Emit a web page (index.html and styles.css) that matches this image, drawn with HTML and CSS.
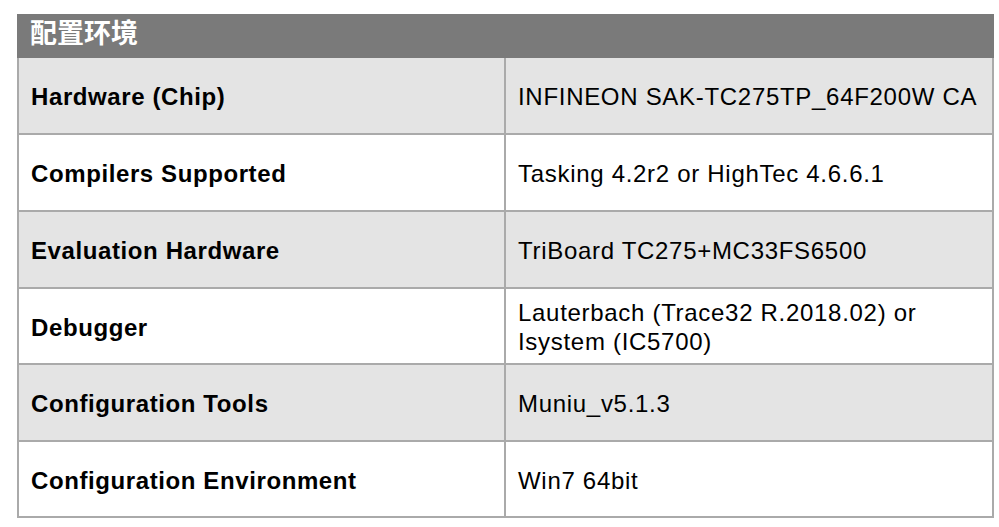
FILE: index.html
```html
<!DOCTYPE html>
<html>
<head>
<meta charset="utf-8">
<link rel="stylesheet" href="styles.css">
</head>
<body>
<div class="wrap">
  <div class="title">配置环境</div>
  <div class="tbl">
    <div class="row gray h77"><div class="k">Hardware (Chip)</div><div class="v">INFINEON SAK-TC275TP_64F200W CA</div></div>
    <div class="row h77"><div class="k">Compilers Supported</div><div class="v">Tasking 4.2r2 or HighTec 4.6.6.1</div></div>
    <div class="row gray h77"><div class="k">Evaluation Hardware</div><div class="v">TriBoard TC275+MC33FS6500</div></div>
    <div class="row h76"><div class="k">Debugger</div><div class="v">Lauterbach (Trace32 R.2018.02) or<br>Isystem (IC5700)</div></div>
    <div class="row gray h77"><div class="k">Configuration Tools</div><div class="v">Muniu_v5.1.3</div></div>
    <div class="row h76"><div class="k">Configuration Environment</div><div class="v">Win7 64bit</div></div>
  </div>
</div>
</body>
</html>
```
FILE: styles.css
```css
html, body { margin: 0; padding: 0; background: #fff; }
body { font-family: "Liberation Sans", Arial, sans-serif; color: #000; }
.wrap { padding: 14px 5px 0 17px; width: 977px; }
.title {
  height: 44px;
  background: #7a7a7a;
  color: #fff;
  font-family: "Liberation Sans", "Noto Sans CJK SC", sans-serif;
  font-weight: bold;
  font-size: 27px;
  line-height: 40px;
  padding-left: 13px;
  box-sizing: border-box;
}
.tbl {
  border-left: 2px solid #aaaaaa;
  border-right: 2px solid #aaaaaa;
}
.row {
  display: grid;
  grid-template-columns: 487px 1fr;
  border-bottom: 2px solid #aaaaaa;
  box-sizing: border-box;
  font-size: 24px;
  line-height: 29px;
}
.h77 { height: 77px; }
.h76 { height: 76px; }
.gray { background: #e4e4e4; }
.k {
  font-weight: bold;
  letter-spacing: 0.6px;
  display: flex;
  align-items: center;
  padding: 2px 0 0 12px;
  border-right: 2px solid #aaaaaa;
}
.v {
  letter-spacing: 0.7px;
  display: flex;
  align-items: center;
  padding: 2px 0 0 12px;
}
```
